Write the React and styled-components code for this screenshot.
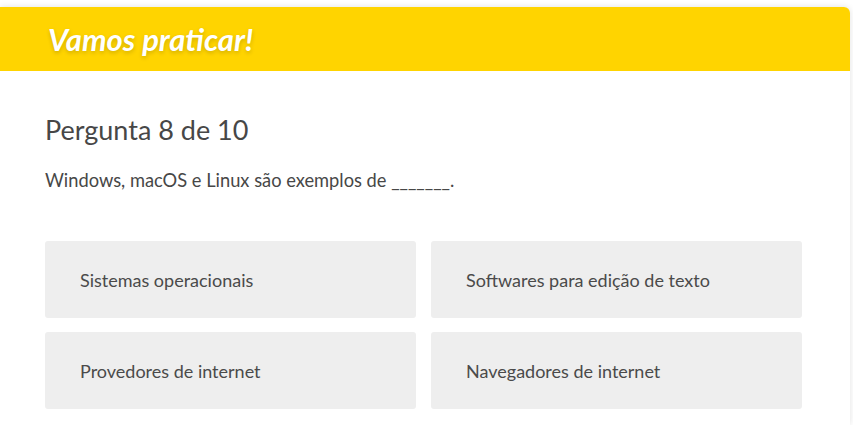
import styled, { createGlobalStyle } from 'styled-components'

const GlobalStyle = createGlobalStyle`
    body {
        margin: 0;
        background: #ffffff;
        font-family: Lato, "Liberation Sans", sans-serif;
    }
`

const Page = styled.div`
    padding: 7px 3px 0 0;
`

const Card = styled.div`
    background: #ffffff;
    border-radius: 0 6px 0 0;
    box-shadow: 0 0 6px rgba(0, 0, 0, 0.12);
    min-height: 418px;
`

const Header = styled.div`
    background: #ffd400;
    height: 64px;
    display: flex;
    align-items: center;
    padding-left: 48px;
    border-radius: 0 6px 0 0;
`

const HeaderTitle = styled.h1`
    margin: 0;
    color: #ffffff;
    font-size: 31px;
    font-weight: 700;
    font-style: italic;
    text-shadow: 0 2px 4px rgba(0, 0, 0, 0.18);
`

const Body = styled.div`
    padding: 42px 48px 16px 45px;
`

const Title = styled.h2`
    margin: 0;
    font-size: 27px;
    font-weight: 400;
    color: #474747;
`

const Question = styled.p`
    margin: 23px 0 0;
    font-size: 18.3px;
    color: #474747;
`

const Options = styled.div`
    margin-top: 50px;
    display: grid;
    grid-template-columns: 1fr 1fr;
    gap: 14px 15px;
`

const Option = styled.button`
    height: 77px;
    border: none;
    border-radius: 3px;
    background: #eeeeee;
    text-align: left;
    padding: 0 0 0 35px;
    font-family: inherit;
    font-size: 18px;
    color: #4a4a4a;
    cursor: pointer;
`

const answers = [
    'Sistemas operacionais',
    'Softwares para edição de texto',
    'Provedores de internet',
    'Navegadores de internet',
]

const App = () => {
    return (
        <Page>
            <GlobalStyle />
            <Card>
                <Header>
                    <HeaderTitle>Vamos praticar!</HeaderTitle>
                </Header>
                <Body>
                    <Title>Pergunta 8 de 10</Title>
                    <Question>Windows, macOS e Linux são exemplos de _______.</Question>
                    <Options>
                        {answers.map((a) => (
                            <Option key={a}>{a}</Option>
                        ))}
                    </Options>
                </Body>
            </Card>
        </Page>
    )
}

export default App
